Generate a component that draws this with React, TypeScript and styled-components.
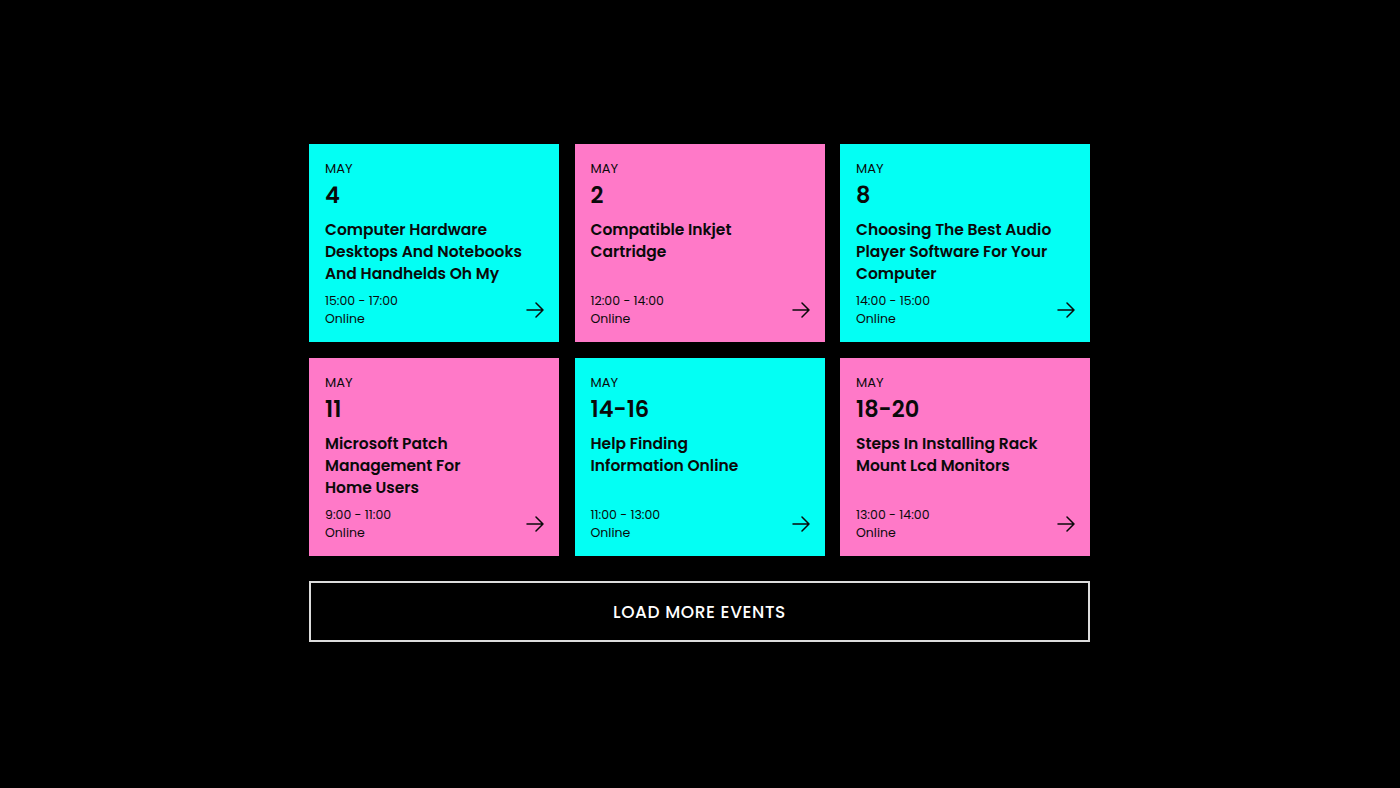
import React from "react";
import styled, { createGlobalStyle } from "styled-components";

const Global = createGlobalStyle`
  html, body { margin: 0; padding: 0; background: #000; }
  body { font-family: "Poppins", "Inter", "Noto Sans", sans-serif; }
`;

const Page = styled.main`
  min-height: 788px;
  display: flex;
  justify-content: center;
  padding-top: 144px;
  padding-right: 1px;
  box-sizing: border-box;
`;

const Wrap = styled.div`
  width: 781px;
  display: flex;
  flex-direction: column;
  gap: 25px;
`;

const Grid = styled.div`
  display: grid;
  grid-template-columns: repeat(3, 1fr);
  column-gap: 15.5px;
  row-gap: 16px;
`;

const Card = styled.a<{ $tone: "cyan" | "pink" }>`
  height: 198px;
  box-sizing: border-box;
  padding: 15px 15px 14px 16px;
  display: flex;
  flex-direction: column;
  color: #0a0a0a;
  text-decoration: none;
  background: ${(p) => (p.$tone === "cyan" ? "#03fff4" : "#ff79c8")};
`;

const Month = styled.div`
  font-size: 13px;
  line-height: 20px;
  font-weight: 400;
`;

const Day = styled.div`
  font-size: 22.5px;
  line-height: 30px;
  font-weight: 600;
  margin-top: 1px;
`;

const Title = styled.h3`
  margin: 9px 0 0;
  font-size: 15.5px;
  line-height: 22px;
  font-weight: 600;
`;

const Line = styled.span`
  display: block;
  white-space: nowrap;
`;

const Footer = styled.div`
  margin-top: auto;
  display: flex;
  align-items: center;
  justify-content: space-between;
`;

const Meta = styled.div`
  font-size: 12.5px;
  line-height: 18px;
  font-weight: 400;
`;

const Arrow = styled.svg`
  width: 18px;
  height: 16px;
`;

const LoadMore = styled.button`
  height: 61px;
  width: 100%;
  background: #000;
  color: #fff;
  border: 2px solid #dcdcdc;
  font-family: inherit;
  font-size: 17px;
  font-weight: 500;
  letter-spacing: 0.6px;
  cursor: pointer;
`;

type Tone = "cyan" | "pink";

const events: { tone: Tone; day: string; title: string[]; time: string }[] = [
  { tone: "cyan", day: "4", title: ["Computer Hardware", "Desktops And Notebooks", "And Handhelds Oh My"], time: "15:00 - 17:00" },
  { tone: "pink", day: "2", title: ["Compatible Inkjet", "Cartridge"], time: "12:00 - 14:00" },
  { tone: "cyan", day: "8", title: ["Choosing The Best Audio", "Player Software For Your", "Computer"], time: "14:00 - 15:00" },
  { tone: "pink", day: "11", title: ["Microsoft Patch", "Management For", "Home Users"], time: "9:00 - 11:00" },
  { tone: "cyan", day: "14-16", title: ["Help Finding", "Information Online"], time: "11:00 - 13:00" },
  { tone: "pink", day: "18-20", title: ["Steps In Installing Rack", "Mount Lcd Monitors"], time: "13:00 - 14:00" },
];

export default function App() {
  return (
    <>
      <Global />
      <Page>
        <Wrap>
          <Grid>
            {events.map((e) => (
              <Card key={e.day} $tone={e.tone} href="#">
                <Month>MAY</Month>
                <Day>{e.day}</Day>
                <Title>
                  {e.title.map((l) => (
                    <Line key={l}>{l}</Line>
                  ))}
                </Title>
                <Footer>
                  <Meta>
                    {e.time}
                    <br />
                    Online
                  </Meta>
                  <Arrow viewBox="0 0 18 16" fill="none" stroke="#0a0a0a" strokeWidth="1.5" strokeLinecap="round" strokeLinejoin="round">
                    <path d="M1 8H17M10 1L17 8L10 15" />
                  </Arrow>
                </Footer>
              </Card>
            ))}
          </Grid>
          <LoadMore>LOAD MORE EVENTS</LoadMore>
        </Wrap>
      </Page>
    </>
  );
}
